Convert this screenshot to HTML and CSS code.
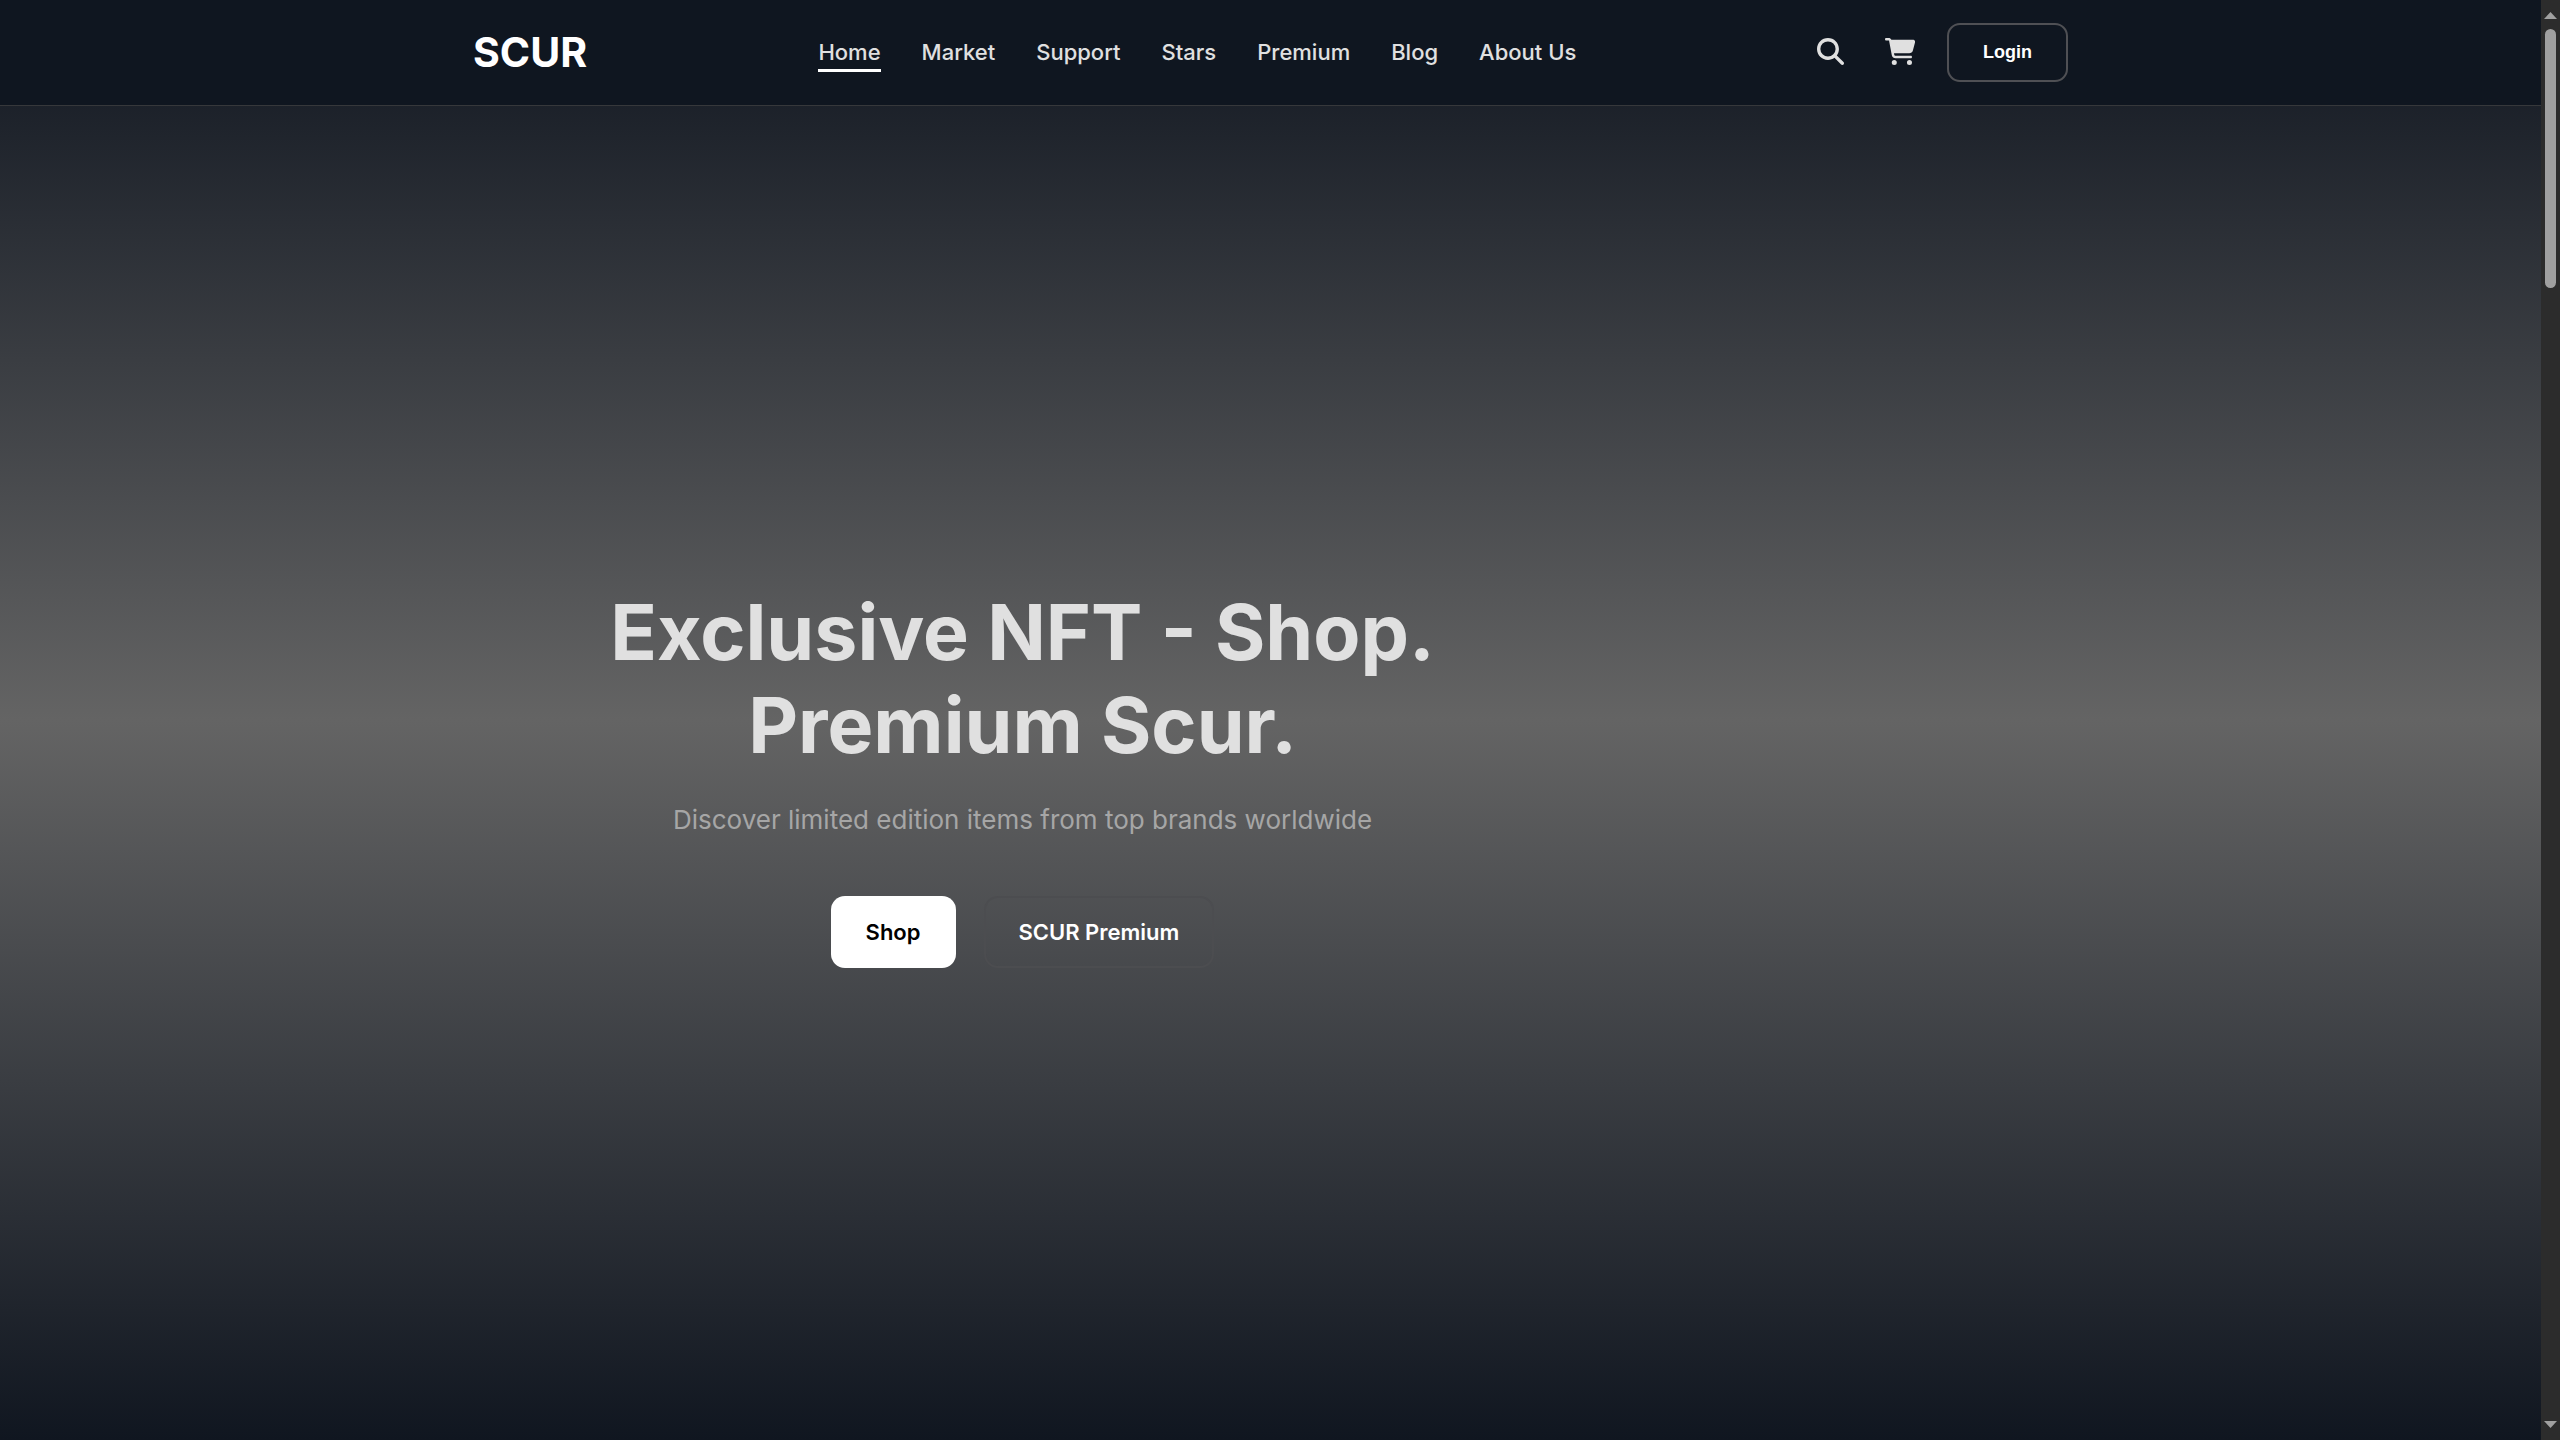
FILE: index.html
```html
<!DOCTYPE html>
<html lang="en">
  <head>
    <meta charset="UTF-8" />
    <meta name="viewport" content="width=device-width, initial-scale=1.0" />
    <title>SCUR</title>
    <link rel="stylesheet" href="styles.css">
  </head>
  <body>
    <div class="page">
      <header class="header">
        <div class="container header-inner">
          <a href="#" class="logo">SCUR</a>
          <nav class="nav">
            <a href="#" class="active">Home</a>
            <a href="#market">Market</a>
            <a href="#support">Support</a>
            <a href="#stars">Stars</a>
            <a href="#premium">Premium</a>
            <a href="#blog">Blog</a>
            <a href="#about">About Us</a>
          </nav>
          <div class="actions">
            <button class="icon-btn" aria-label="Search">
              <svg viewBox="0 0 512 512"><path d="M416 208c0 45.9-14.9 88.3-40 122.7L502.6 457.4c12.5 12.5 12.5 32.8 0 45.3s-32.8 12.5-45.3 0L330.7 376c-34.4 25.2-76.8 40-122.7 40C93.1 416 0 322.9 0 208S93.1 0 208 0S416 93.1 416 208zM208 352a144 144 0 1 0 0-288 144 144 0 1 0 0 288z"/></svg>
            </button>
            <button class="icon-btn" aria-label="Cart">
              <svg viewBox="0 0 576 512"><path d="M0 24C0 10.7 10.7 0 24 0H69.5c22 0 41.5 12.8 50.6 32h411c26.3 0 45.5 25 38.6 50.4l-41 152.3c-8.5 31.4-37 53.3-69.5 53.3H170.7l5.4 28.5c2.2 11.3 12.1 19.5 23.6 19.5H488c13.3 0 24 10.7 24 24s-10.7 24-24 24H199.7c-34.6 0-64.3-24.6-70.7-58.5L77.4 54.5c-.7-3.8-4-6.5-7.9-6.5H24C10.7 48 0 37.3 0 24zM128 464a48 48 0 1 1 96 0 48 48 0 1 1-96 0zm336-48a48 48 0 1 1 0 96 48 48 0 1 1 0-96z"/></svg>
            </button>
            <button class="login-btn">Login</button>
          </div>
        </div>
      </header>
      <main class="hero">
        <div class="container">
          <div class="hero-content">
            <h1>Exclusive NFT - Shop.<br />Premium Scur.</h1>
            <p>Discover limited edition items from top brands worldwide</p>
            <div class="hero-buttons">
              <button class="btn btn-primary">Shop</button>
              <button class="btn btn-secondary">SCUR Premium</button>
            </div>
          </div>
        </div>
      </main>
    </div>
    <div class="scrollbar" aria-hidden="true">
      <svg class="arrow" viewBox="0 0 13 7"><path d="M6.5 0L13 7H0z"/></svg>
      <div class="track"><div class="thumb"></div></div>
      <svg class="arrow" viewBox="0 0 13 7"><path d="M0 0h13L6.5 7z"/></svg>
    </div>
  </body>
</html>
```
FILE: styles.css
```css
* {
  margin: 0;
  padding: 0;
  box-sizing: border-box;
}

body {
  display: flex;
  min-height: 100vh;
  font-family: Inter, sans-serif;
  font-size: 22px;
  color: #e0e0e0;
  background-color: #0f1620;
}

a {
  color: inherit;
  text-decoration: none;
}

button {
  border: none;
  background: none;
  cursor: pointer;
}

.page {
  flex: 1;
  display: flex;
  flex-direction: column;
  background: linear-gradient(to bottom, #101620 0%, #646464 50%, #101620 100%);
}

.container {
  width: 100%;
  max-width: 1595px;
  margin: 0 auto;
}

.header {
  background-color: #0f1620;
  border-bottom: 1px solid #36383b;
  padding: 23px 0;
}

.header-inner {
  display: flex;
  align-items: center;
  justify-content: space-between;
}

.logo {
  padding-bottom: 2px;
  font-size: 41px;
  line-height: 48px;
  font-weight: 700;
  color: #fff;
}

.nav {
  display: flex;
  gap: 41px;
  padding-bottom: 2px;
  font-weight: 500;
  line-height: 40px;
}

.nav a {
  position: relative;
}

.nav .active::after {
  content: '';
  position: absolute;
  left: 0;
  right: 0;
  bottom: 0;
  height: 3px;
  background-color: #fff;
}

.actions {
  display: flex;
  align-items: center;
  gap: 23px;
}

.icon-btn {
  padding: 8px 9px 10px;
}

.icon-btn svg {
  display: block;
  height: 27px;
  fill: #e0e0e0;
}

.login-btn {
  padding: 0 34px;
  height: 59px;
  border: 2px solid #4f5054;
  border-radius: 13px;
  font-family: 'Liberation Sans', Arial, sans-serif;
  font-size: 18px;
  font-weight: 700;
  color: #fff;
}

.hero {
  flex: 1;
  display: flex;
  align-items: center;
  padding-top: 8px;
}

.hero-content {
  max-width: 1099px;
  text-align: center;
}

.hero-content h1 {
  font-size: 77px;
  line-height: 93px;
  font-weight: 700;
  margin-bottom: 28px;
}

.hero-content p {
  font-size: 26px;
  line-height: 40px;
  color: #a6a6a6;
  margin-bottom: 56px;
}

.hero-buttons {
  display: flex;
  justify-content: center;
  gap: 28px;
}

.btn {
  height: 72px;
  padding: 0 35px;
  border-radius: 14px;
  font-family: inherit;
  font-size: 22px;
  font-weight: 600;
}

.btn-primary {
  background-color: #fff;
  color: #000;
}

.btn-secondary {
  padding: 0 33px;
  border: 2px solid #4c4d50;
  color: #fff;
}

.scrollbar {
  display: flex;
  flex-direction: column;
  align-items: center;
  width: 19px;
  padding: 12px 0;
  background-color: #2c2c2c;
}

.arrow {
  width: 13px;
  height: 7px;
  fill: #a0a0a0;
}

.track {
  flex: 1;
  padding: 10px 0;
}

.thumb {
  width: 11px;
  height: 259px;
  border-radius: 6px;
  background-color: #a0a0a0;
}
```
